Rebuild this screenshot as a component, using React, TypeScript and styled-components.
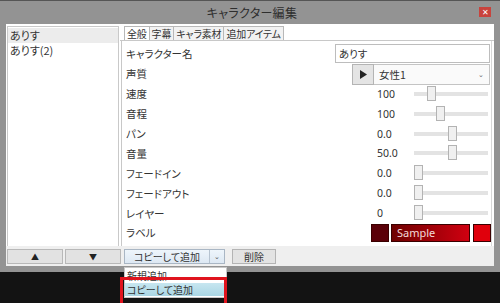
import React from "react";
import styled, { createGlobalStyle } from "styled-components";

const GlobalStyle = createGlobalStyle`
  html, body {
    margin: 0;
    padding: 0;
    background: #121212;
  }
  body {
    font-family: "Noto Sans CJK JP", "Noto Sans", sans-serif;
    font-feature-settings: "palt";
    color: #333;
  }
`;

const Page = styled.div`
  position: relative;
  width: 500px;
  height: 303px;
  overflow: hidden;
  background: #131313;
`;

const Window = styled.div`
  display: flex;
  flex-direction: column;
  height: 272px;
  box-sizing: border-box;
  padding: 0 6px 6px 6px;
  background: #939393;
  border-top: 1px solid #555;
`;

const TitleBar = styled.div`
  position: relative;
  height: 23px;
  display: flex;
  align-items: center;
  justify-content: center;
`;

const Title = styled.div`
  font-size: 12px;
  color: #2e2e2e;
  letter-spacing: 0.3px;
  padding-left: 4px;
`;

const CloseBtn = styled.div`
  position: absolute;
  right: 3px;
  top: 6px;
  width: 12px;
  height: 10px;
  background: #c8433d;
  color: #fff;
  font-size: 8px;
  line-height: 10px;
  text-align: center;
`;

const Client = styled.div`
  flex: 1;
  display: flex;
  flex-direction: column;
  background: #fff;
`;

const Body = styled.div`
  flex: 1;
  display: flex;
  padding-top: 2px;
`;

const List = styled.div`
  width: 114px;
  margin-left: 1px;
  padding-top: 1px;
  border: 1px solid #c9c9c9;
  border-bottom: none;
  background: #fff;
`;

const ListItem = styled.div<{ $selected?: boolean }>`
  height: 15px;
  line-height: 15px;
  padding-left: 2px;
  font-size: 11px;
  background: ${(p) => (p.$selected ? "#ececec" : "transparent")};
`;

const RightPane = styled.div`
  flex: 1;
  display: flex;
  flex-direction: column;
  margin-left: 1px;
`;

const Tabs = styled.div`
  display: flex;
  height: 14px;
  padding-left: 4px;
  border-bottom: 1px solid #c8c8c8;
`;

const Tab = styled.div<{ $active?: boolean }>`
  height: 14px;
  box-sizing: border-box;
  padding: 0 2px;
  font-size: 10px;
  line-height: 13px;
  letter-spacing: -0.2px;
  border: 1px solid #b8b8b8;
  border-bottom: none;
  margin-right: -1px;
  background: ${(p) => (p.$active ? "#fff" : "#f2f2f2")};
`;

const Panel = styled.div`
  flex: 1;
  margin-left: 1px;
  margin-right: 2px;
  border-left: 1px solid #c8c8c8;
  border-right: 1px solid #d8d8d8;
  padding: 3px 0 0 4px;
  display: flex;
  flex-direction: column;
`;

const Row = styled.div`
  height: 19.9px;
  display: flex;
  align-items: center;
`;

const Label = styled.div`
  width: 209px;
  font-size: 10.5px;
  color: #333;
`;

const TextBox = styled.div`
  width: 155px;
  height: 19px;
  box-sizing: border-box;
  border: 1px solid #bdbdbd;
  font-size: 10.5px;
  line-height: 17px;
  padding-left: 3px;
`;

const VoiceGroup = styled.div`
  display: flex;
  margin-left: 17px;
  height: 21px;
  margin-top: 1px;
`;

const PlayBtn = styled.div`
  width: 22px;
  box-sizing: border-box;
  border: 1px solid #b4b4b4;
  background: #e4e4e4;
  display: flex;
  align-items: center;
  justify-content: center;
`;

const Select = styled.div`
  width: 116px;
  box-sizing: border-box;
  border: 1px solid #c4c4c4;
  border-left: none;
  background: #fafafa;
  display: flex;
  align-items: center;
  justify-content: space-between;
  padding: 0 5px 0 5px;
  font-size: 10.5px;
`;

const Chevron = styled.span`
  font-size: 7px;
  color: #666;
`;

const Value = styled.div`
  margin-left: 42px;
  width: 37px;
  font-size: 10.5px;
  font-family: "Noto Sans", "Noto Sans CJK JP", sans-serif;
  color: #333;
`;

const Track = styled.div`
  position: relative;
  width: 74px;
  height: 4px;
  background: #e3e3e3;
`;

const Thumb = styled.div`
  position: absolute;
  top: -6px;
  width: 9px;
  height: 15px;
  box-sizing: border-box;
  background: #f0f0f0;
  border: 1px solid #b3b3b3;
`;

const Colors = styled.div`
  display: flex;
  margin-left: 36px;
  height: 18px;
  gap: 2px;
`;

const Swatch = styled.div<{ $color: string }>`
  width: 18px;
  box-sizing: border-box;
  background: ${(p) => p.$color};
  border: 1px solid #3a0000;
`;

const SampleBox = styled.div`
  width: 79px;
  margin-right: 1px;
  box-sizing: border-box;
  border: 1px solid #3a0000;
  background: linear-gradient(to right, #6e0000, #d00010);
  color: #f3dada;
  font-family: "Noto Sans", sans-serif;
  font-size: 11px;
  line-height: 16px;
  padding-left: 5px;
`;

const BottomBar = styled.div`
  height: 20px;
  display: flex;
  align-items: flex-start;
  padding-top: 3px;
  box-sizing: border-box;
  background: #efefef;
`;

const ArrowBtn = styled.div`
  width: 56px;
  height: 15px;
  margin-left: 1px;
  margin-right: 1px;
  box-sizing: border-box;
  border: 1px solid #b8b8b8;
  background: #e2e2e2;
  font-size: 8px;
  line-height: 13px;
  text-align: center;
  color: #222;
`;

const SplitButton = styled.div`
  display: flex;
  height: 15px;
  margin-left: 2px;
  box-sizing: border-box;
  border: 1px solid #a9b6c4;
  background: linear-gradient(#eef5fb, #dde8f3);
`;

const SplitMain = styled.div`
  width: 84px;
  font-size: 10px;
  line-height: 13px;
  text-align: center;
  color: #333;
`;

const SplitArrow = styled.div`
  width: 14px;
  border-left: 1px solid #b6c3d0;
  font-size: 7px;
  line-height: 13px;
  text-align: center;
  color: #555;
`;

const Button = styled.div`
  width: 44px;
  height: 15px;
  margin-left: 7px;
  box-sizing: border-box;
  border: 1px solid #b4b4b4;
  background: #e3e3e3;
  font-size: 10px;
  line-height: 13px;
  text-align: center;
  color: #333;
`;

const Menu = styled.div`
  position: absolute;
  left: 124px;
  top: 267px;
  width: 101px;
  background: #fff;
  border: 1px solid #c8c8c8;
  padding-top: 1px;
`;

const MenuItem = styled.div<{ $hot?: boolean }>`
  height: 13px;
  font-size: 10px;
  line-height: 13px;
  padding-left: 2px;
  margin-bottom: 1px;
  background: ${(p) =>
    p.$hot ? "linear-gradient(#c7e6f0, #a9d6e4)" : "transparent"};
`;

const Callout = styled.div`
  position: absolute;
  left: 120px;
  top: 277px;
  width: 107px;
  height: 30px;
  box-sizing: border-box;
  border: 3px solid #e0141e;
  pointer-events: none;
`;

type SliderRow = { label: string; value: string; pos: number };

const sliders: SliderRow[] = [
  { label: "速度", value: "100", pos: 13 },
  { label: "音程", value: "100", pos: 22 },
  { label: "パン", value: "0.0", pos: 34 },
  { label: "音量", value: "50.0", pos: 34 },
  { label: "フェードイン", value: "0.0", pos: 0 },
  { label: "フェードアウト", value: "0.0", pos: 0 },
  { label: "レイヤー", value: "0", pos: 0 },
];

const App: React.FC = () => {
  return (
    <Page>
      <GlobalStyle />
      <Window>
        <TitleBar>
          <Title>キャラクター編集</Title>
          <CloseBtn>✕</CloseBtn>
        </TitleBar>
        <Client>
          <Body>
            <List>
              <ListItem $selected>ありす</ListItem>
              <ListItem>ありす(2)</ListItem>
            </List>
            <RightPane>
              <Tabs>
                <Tab $active>全般</Tab>
                <Tab>字幕</Tab>
                <Tab>キャラ素材</Tab>
                <Tab>追加アイテム</Tab>
              </Tabs>
              <Panel>
                <Row>
                  <Label>キャラクター名</Label>
                  <TextBox>ありす</TextBox>
                </Row>
                <Row>
                  <Label>声質</Label>
                  <VoiceGroup>
                    <PlayBtn>
                      <svg width="7" height="9" viewBox="0 0 7 9">
                        <path d="M0 0 L7 4.5 L0 9 Z" fill="#222" />
                      </svg>
                    </PlayBtn>
                    <Select>
                      <span>女性1</span>
                      <Chevron>⌄</Chevron>
                    </Select>
                  </VoiceGroup>
                </Row>
                {sliders.map((s) => (
                  <Row key={s.label}>
                    <Label>{s.label}</Label>
                    <Value>{s.value}</Value>
                    <Track>
                      <Thumb style={{ left: s.pos }} />
                    </Track>
                  </Row>
                ))}
                <Row>
                  <Label>ラベル</Label>
                  <Colors>
                    <Swatch $color="#5a0008" />
                    <SampleBox>Sample</SampleBox>
                    <Swatch $color="#e0000c" />
                  </Colors>
                </Row>
              </Panel>
            </RightPane>
          </Body>
          <BottomBar>
            <ArrowBtn>▲</ArrowBtn>
            <ArrowBtn>▼</ArrowBtn>
            <SplitButton>
              <SplitMain>コピーして追加</SplitMain>
              <SplitArrow>⌄</SplitArrow>
            </SplitButton>
            <Button>削除</Button>
          </BottomBar>
        </Client>
      </Window>
      <Menu>
        <MenuItem>新規追加</MenuItem>
        <MenuItem $hot>コピーして追加</MenuItem>
      </Menu>
      <Callout />
    </Page>
  );
};

export default App;
